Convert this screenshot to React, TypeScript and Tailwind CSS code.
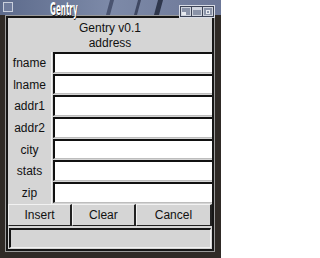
import React from 'react';

const fields = ['fname', 'lname', 'addr1', 'addr2', 'city', 'stats', 'zip'];

const FormRow: React.FC<{ label: string }> = ({ label }) => (
    <div className="flex h-[21.7px]">
        <div className="w-[44px] flex items-center justify-center text-[12px] text-[#111] border-r border-[#f4f4f4]">
            {label}
        </div>
        <div className="flex-1 ml-[1px] mb-[1px] bg-white border-t-2 border-l-2 border-t-[#111] border-l-[#111] border-b border-b-[#bdbdbd]" />
    </div>
);

export default function App() {
    return (
        <div
            className="w-[221px] h-[258px] overflow-hidden bg-[#2f2a26] flex flex-col"
            style={{ fontFamily: '"Liberation Sans", Arial, sans-serif' }}
        >
            {/* Title strip */}
            <div className="relative h-[15px] bg-gradient-to-r from-[#5d6b8c] via-[#7d8aa8] to-[#6c7797]">
                <div className="absolute left-[3px] top-[2px] w-[10px] h-[10px] border border-[#c9cfdc] bg-[#6f7c9c]" />
                <div
                    className="absolute left-[50px] top-[-3px] text-[17px] font-bold text-white scale-x-[0.47] origin-left"
                    style={{ fontFamily: '"DejaVu Sans Condensed", "DejaVu Sans", sans-serif', textShadow: '1px 1px 0 #222' }}
                >
                    Gentry
                </div>
                <div className="absolute left-[108px] top-0 w-[4px] h-[15px] bg-[#4a5470] skew-x-[-15deg]" />
                <div className="absolute left-[136px] top-0 w-[3px] h-[15px] bg-[#3f4862] skew-x-[-15deg]" />
                <div className="absolute left-[156px] top-0 w-[5px] h-[15px] bg-[#2f374c] skew-x-[-15deg]" />
                <div className="absolute left-[179px] top-[5px] flex gap-[1px] border border-[#d8dce6] bg-[#3c4356] p-[1px] z-10">
                    <div className="w-[10px] h-[9px] border border-[#cfd4de] bg-[#8a93a8] flex items-end justify-start">
                        <div className="w-[4px] h-[3px] bg-[#e6e9ef]" />
                    </div>
                    <div className="w-[10px] h-[9px] border border-[#cfd4de] bg-[#8a93a8] border-t-[3px]" />
                    <div className="w-[10px] h-[9px] border border-[#cfd4de] bg-[#8a93a8] flex items-center justify-center">
                        <div className="w-[4px] h-[4px] border border-[#e6e9ef]" />
                    </div>
                </div>
            </div>

            {/* Window */}
            <div className="ml-[5px] w-[210px] border border-[#9a9a9a]">
                <div className="border-[2px] border-[#161616] bg-[#d5d5d5] flex flex-col">
                    <div className="h-[34px] pt-[2px] flex flex-col items-center justify-center text-[12px] leading-[15px] text-[#111]">
                        <div>Gentry v0.1</div>
                        <div>address</div>
                    </div>
                    {fields.map((f) => (
                        <FormRow key={f} label={f} />
                    ))}
                    <div className="flex h-[22px]">
                        {['Insert', 'Clear', 'Cancel'].map((b, i) => (
                            <div
                                key={b}
                                className={`flex items-center justify-center text-[12px] text-[#111] bg-[#d5d5d5] border-t border-l border-t-[#f2f2f2] border-l-[#f2f2f2] border-r-2 border-b border-r-[#222] border-b-[#222] ${i === 2 ? 'flex-[1.2]' : 'flex-1'}`}
                            >
                                {b}
                            </div>
                        ))}
                    </div>
                    <div className="mt-[2px] mx-[1px] mb-[1px] h-[20px] bg-[#d5d5d5] border-t-2 border-l-2 border-t-[#161616] border-l-[#161616] border-b border-r border-b-[#f2f2f2] border-r-[#f2f2f2]" />
                </div>
            </div>
        </div>
    );
}
